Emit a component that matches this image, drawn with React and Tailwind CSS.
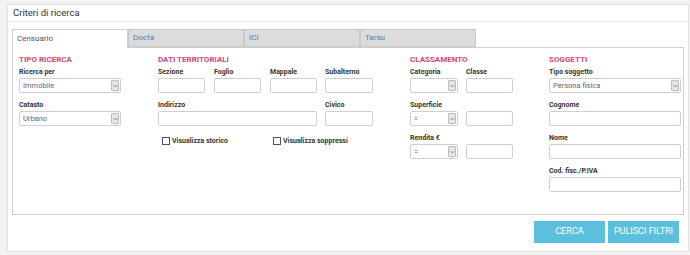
import React from "react";

const font = { fontFamily: "Roboto, 'Liberation Sans', sans-serif" };

function Label({ children }) {
  return (
    <div className="h-[12px] text-[7px] font-bold leading-[12px] text-[#333]">
      {children}
    </div>
  );
}

function Input({ w }) {
  return (
    <div
      className={`h-[15px] rounded-[2px] border border-[#cfcfcf] bg-white ${w}`}
    />
  );
}

function Select({ w, value }) {
  return (
    <div
      className={`flex h-[15px] items-center rounded-[2px] border border-[#cfcfcf] bg-white ${w}`}
    >
      <span className="flex-1 truncate pl-[3px] text-[7.5px] leading-none text-[#666]">
        {value}
      </span>
      <span className="mr-[1px] flex h-[11px] w-[8px] items-center justify-center rounded-[1px] border border-[#bdbdbd] bg-[#e6e6e6]">
        <svg width="5" height="4" viewBox="0 0 5 4">
          <path d="M0.5 1 L2.5 3 L4.5 1" fill="none" stroke="#777" strokeWidth="0.8" />
        </svg>
      </span>
    </div>
  );
}

function Field({ label, children }) {
  return (
    <div className="mb-[6px]">
      <Label>{label}</Label>
      {children}
    </div>
  );
}

function Heading({ children }) {
  return (
    <div className="h-[12px] text-[8px] font-bold uppercase leading-[12px] text-[#d6457a]">
      {children}
    </div>
  );
}

function Checkbox({ label }) {
  return (
    <div className="flex items-center gap-[2px]">
      <span className="h-[8px] w-[8px] border border-[#555] bg-white" />
      <span className="text-[7px] font-bold text-[#333]">{label}</span>
    </div>
  );
}

const tabs = ["Censuario", "Docfa", "ICI", "Tarsu"];

export default function App() {
  return (
    <div className="h-[255px] w-[690px] bg-[#f2f2f2] pl-[7px] pt-[4px]" style={font}>
      <div className="h-[248px] w-[682px] border border-[#e2e2e2] bg-white">
        <div className="flex h-[17px] items-center border-b border-[#e6e6e6] pl-[5px] text-[9.5px] text-[#333]">
          Criteri di ricerca
        </div>
        <div className="px-[4px] pt-[7px]">
          <div className="flex h-[18px]">
            {tabs.map((t, i) => (
              <div
                key={t}
                className={
                  i === 0
                    ? "relative z-10 -mb-px flex w-[116px] items-center border border-b-0 border-[#d0d0d0] bg-white pl-[4px] text-[8px] text-[#555]"
                    : "flex w-[116px] items-center border border-[#c8c8c8] bg-[#dcdcdc] pl-[4px] text-[8px] text-[#4a7fb0]"
                }
              >
                {t}
              </div>
            ))}
          </div>
          <div className="flex h-[168px] w-[672px] border border-[#d0d0d0] bg-white pl-[6px] pt-[6px]">
            <div className="w-[139px] shrink-0">
              <Heading>Tipo ricerca</Heading>
              <Field label="Ricerca per">
                <Select w="w-[102px]" value="Immobile" />
              </Field>
              <Field label="Catasto">
                <Select w="w-[102px]" value="Urbano" />
              </Field>
            </div>
            <div className="w-[252px] shrink-0">
              <Heading>Dati territoriali</Heading>
              <div className="flex gap-[9px]">
                <Field label="Sezione">
                  <Input w="w-[47px]" />
                </Field>
                <Field label="Foglio">
                  <Input w="w-[47px]" />
                </Field>
                <Field label="Mappale">
                  <Input w="w-[47px]" />
                </Field>
                <div className="-ml-[1px]">
                  <Field label="Subalterno">
                    <Input w="w-[48px]" />
                  </Field>
                </div>
              </div>
              <div className="flex gap-[8px]">
                <Field label="Indirizzo">
                  <Input w="w-[159px]" />
                </Field>
                <Field label="Civico">
                  <Input w="w-[48px]" />
                </Field>
              </div>
              <div className="mt-[4px] flex pl-[4px]">
                <div className="w-[111px]">
                  <Checkbox label="Visualizza storico" />
                </div>
                <Checkbox label="Visualizza soppressi" />
              </div>
            </div>
            <div className="w-[139px] shrink-0">
              <Heading>Classamento</Heading>
              <div className="flex gap-[8px]">
                <Field label="Categoria">
                  <Select w="w-[48px]" value="" />
                </Field>
                <Field label="Classe">
                  <Input w="w-[47px]" />
                </Field>
              </div>
              <div className="flex gap-[8px]">
                <Field label="Superficie">
                  <Select w="w-[48px]" value="=" />
                </Field>
                <Field label=" ">
                  <Input w="w-[47px]" />
                </Field>
              </div>
              <div className="flex gap-[8px]">
                <Field label="Rendita €">
                  <Select w="w-[48px]" value="=" />
                </Field>
                <Field label=" ">
                  <Input w="w-[47px]" />
                </Field>
              </div>
            </div>
            <div className="w-[132px] shrink-0">
              <Heading>Soggetti</Heading>
              <Field label="Tipo soggetto">
                <Select w="w-[132px]" value="Persona fisica" />
              </Field>
              <Field label="Cognome">
                <Input w="w-[132px]" />
              </Field>
              <Field label="Nome">
                <Input w="w-[132px]" />
              </Field>
              <Field label="Cod. fisc./P.IVA">
                <Input w="w-[132px]" />
              </Field>
            </div>
          </div>
          <div className="mt-[6px] flex justify-end gap-[3px] pr-[5px]">
            <button className="h-[22px] w-[71px] bg-[#5bc0de] text-[9px] uppercase text-white">
              Cerca
            </button>
            <button className="h-[22px] w-[71px] bg-[#5bc0de] text-[9px] uppercase text-white">
              Pulisci filtri
            </button>
          </div>
        </div>
      </div>
    </div>
  );
}
